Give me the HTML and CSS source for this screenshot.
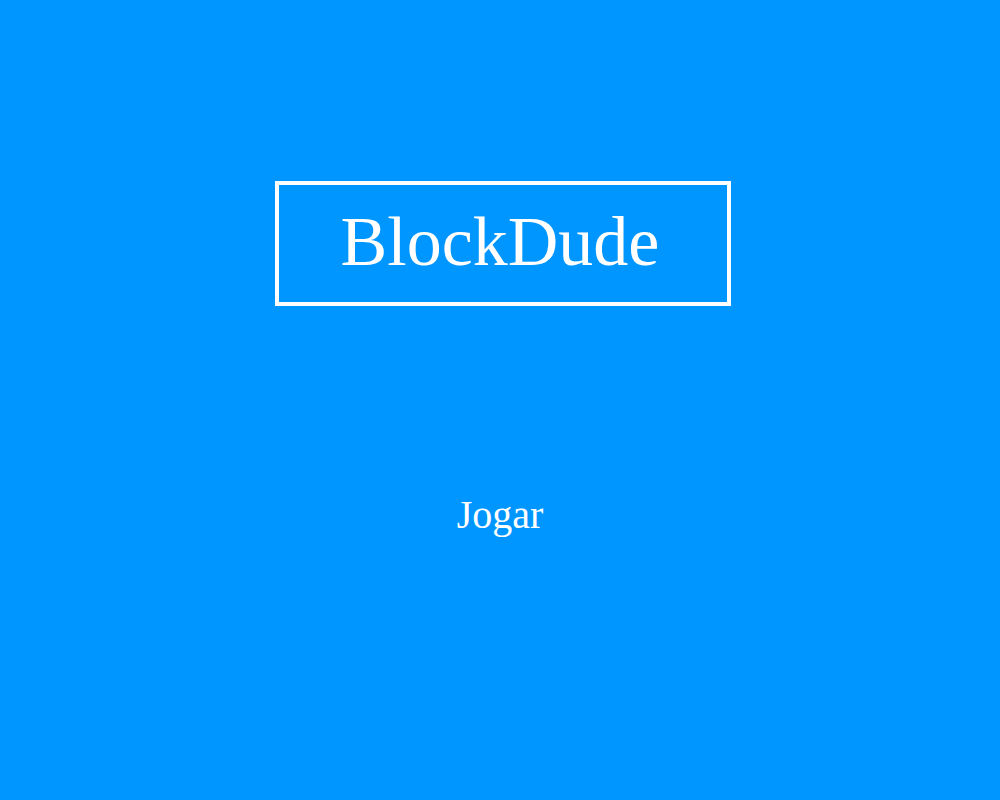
FILE: index.html
```html
<!DOCTYPE html>
<html lang="pt">
<head>
<meta charset="utf-8">
<title>BlockDude</title>
<link rel="stylesheet" href="styles.css">
</head>
<body>
<main class="menu">
  <h1 class="title">BlockDude</h1>
  <div class="play">Jogar</div>
</main>
</body>
</html>
```

FILE: styles.css
```css
html, body {
  margin: 0;
  padding: 0;
  height: 100%;
}
body {
  background: #0096ff;
  color: #ffffff;
  font-family: "Liberation Serif", "Times New Roman", serif;
}
.menu {
  display: flex;
  flex-direction: column;
  align-items: center;
  padding-top: 181px;
  gap: 185px;
}
.title {
  margin: 0 0 0 6px;
  box-sizing: border-box;
  width: 456px;
  height: 125px;
  border: 4px solid #ffffff;
  padding: 17px 6px 0 0;
  font-size: 70px;
  font-weight: normal;
  text-align: center;
  line-height: normal;
}
.play {
  font-size: 40px;
  line-height: normal;
  cursor: pointer;
}
```
